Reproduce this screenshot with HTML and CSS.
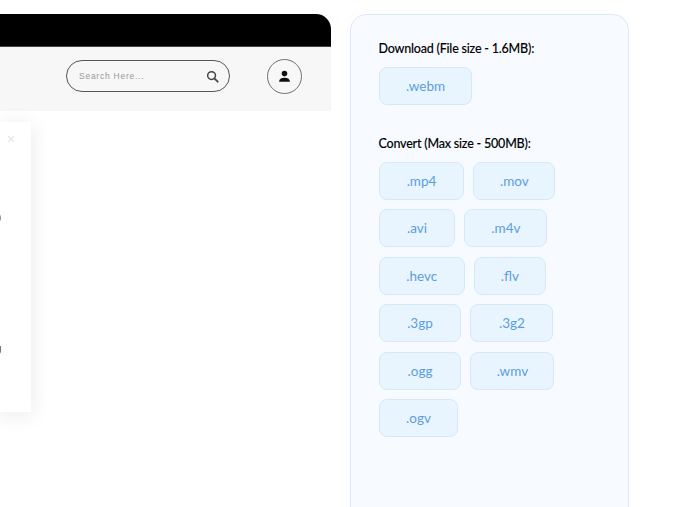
FILE: index.html
```html
<!DOCTYPE html>
<html lang="en">
<head>
<meta charset="utf-8">
<title>Video formats</title>
<link rel="stylesheet" href="styles.css">
</head>
<body>
<div class="page">
  <section class="app">
    <div class="topbar"></div>
    <header class="header">
      <div class="search">
        <span class="placeholder">Search Here...</span>
        <svg class="search-icon" viewBox="0 0 14 14" width="13" height="13" aria-hidden="true"><circle cx="6" cy="6" r="4.2" fill="none" stroke="#444" stroke-width="1.6"/><path d="M9.2 9.2 12.6 12.6" stroke="#444" stroke-width="1.9" stroke-linecap="round"/></svg>
      </div>
      <div class="avatar">
        <svg viewBox="0 0 14 14" width="13" height="13" aria-hidden="true"><circle cx="7" cy="3.9" r="3" fill="#111"/><path d="M1.2 12.6c0-2.9 2-4.3 5.8-4.3s5.8 1.4 5.8 4.3z" fill="#111"/></svg>
      </div>
    </header>
    <aside class="modal">
      <span class="close">×</span>
      <p class="line line-one">)</p>
      <p class="line line-two">g</p>
    </aside>
  </section>
  <section class="panel">
    <h2 class="title">Download (File size - 1.6MB):</h2>
    <div class="formats">
      <a class="format w-webm">.webm</a>
    </div>
    <h2 class="title title-convert">Convert (Max size - 500MB):</h2>
    <div class="formats">
      <a class="format w-mp4">.mp4</a>
      <a class="format w-mov">.mov</a>
      <a class="format w-avi">.avi</a>
      <a class="format w-m4v">.m4v</a>
      <a class="format w-hevc">.hevc</a>
      <a class="format w-flv">.flv</a>
      <a class="format w-3gp">.3gp</a>
      <a class="format w-3g2">.3g2</a>
      <a class="format w-ogg">.ogg</a>
      <a class="format w-wmv">.wmv</a>
      <a class="format w-ogv">.ogv</a>
    </div>
  </section>
</div>
</body>
</html>
```
FILE: styles.css
```css
* { box-sizing: border-box; }
html, body { margin: 0; height: 100%; overflow: hidden; background: #fff; }
body { font-family: "Lato", "Noto Sans", sans-serif; }

.page { display: flex; gap: 19px; padding-top: 14px; height: 507px; overflow: hidden; }

.app { position: relative; width: 331px; flex: none; filter: blur(0.35px); }
.topbar { height: 33px; background: #000; border-top-right-radius: 15px; border-bottom: 1px solid #444; }
.header { height: 64px; background: #f7f7f7; display: flex; align-items: center; justify-content: flex-end; padding-right: 29px; }

.search { width: 164px; height: 32px; margin-right: 37px; margin-top: -6px; border: 1.7px solid #555; border-radius: 16px; display: flex; align-items: center; justify-content: space-between; padding: 0 10px 0 12px; }
.placeholder { font-family: "Liberation Sans", sans-serif; font-size: 8.5px; letter-spacing: 0.75px; color: #999; }
.avatar { width: 35px; height: 35px; margin-top: -5px; border: 1.8px solid #707070; border-radius: 50%; display: flex; align-items: center; justify-content: center; }

.modal { position: absolute; left: 0; top: 108px; width: 31px; height: 290px; background: #fff; box-shadow: 0 3px 22px rgba(0,0,0,.09); overflow: hidden; font-family: "Liberation Sans", sans-serif; font-size: 10px; color: #666; }
.close { position: absolute; left: 7px; top: 10px; font-size: 14px; line-height: 14px; color: #e3e3e3; }
.line { position: absolute; margin: 0; left: -2px; line-height: 12px; }
.line-one { top: 90px; }
.line-two { top: 221px; left: -4px; }

.panel { width: 279px; height: 530px; flex: none; background: #f7fbff; border: 1px solid #dde6ff; border-radius: 16px; padding: 26px 28px 0; }
.title { margin: 0 0 10px -0.5px; font-size: 12.5px; line-height: 16px; font-weight: 500; letter-spacing: -0.2px; color: #000; -webkit-text-stroke: 0.1px #000; }
.title-convert { margin-top: 31px; }

.formats { display: flex; flex-wrap: wrap; gap: 9.4px; width: 222px; }
.format { height: 38px; display: flex; align-items: center; justify-content: center; background: #e8f5ff; border: 1.5px solid #d4e8f8; border-radius: 8px; font-size: 13.5px; font-weight: 400; color: #5c9ddd; }
.w-webm { width: 93px; }
.w-mp4 { width: 85px; }
.w-mov { width: 82px; }
.w-avi { width: 76px; }
.w-m4v { width: 83px; }
.w-hevc { width: 85.5px; }
.w-flv { width: 72px; }
.w-3gp { width: 82px; }
.w-3g2 { width: 83px; }
.w-ogg { width: 82px; }
.w-wmv { width: 84px; }
.w-ogv { width: 79px; }
```
